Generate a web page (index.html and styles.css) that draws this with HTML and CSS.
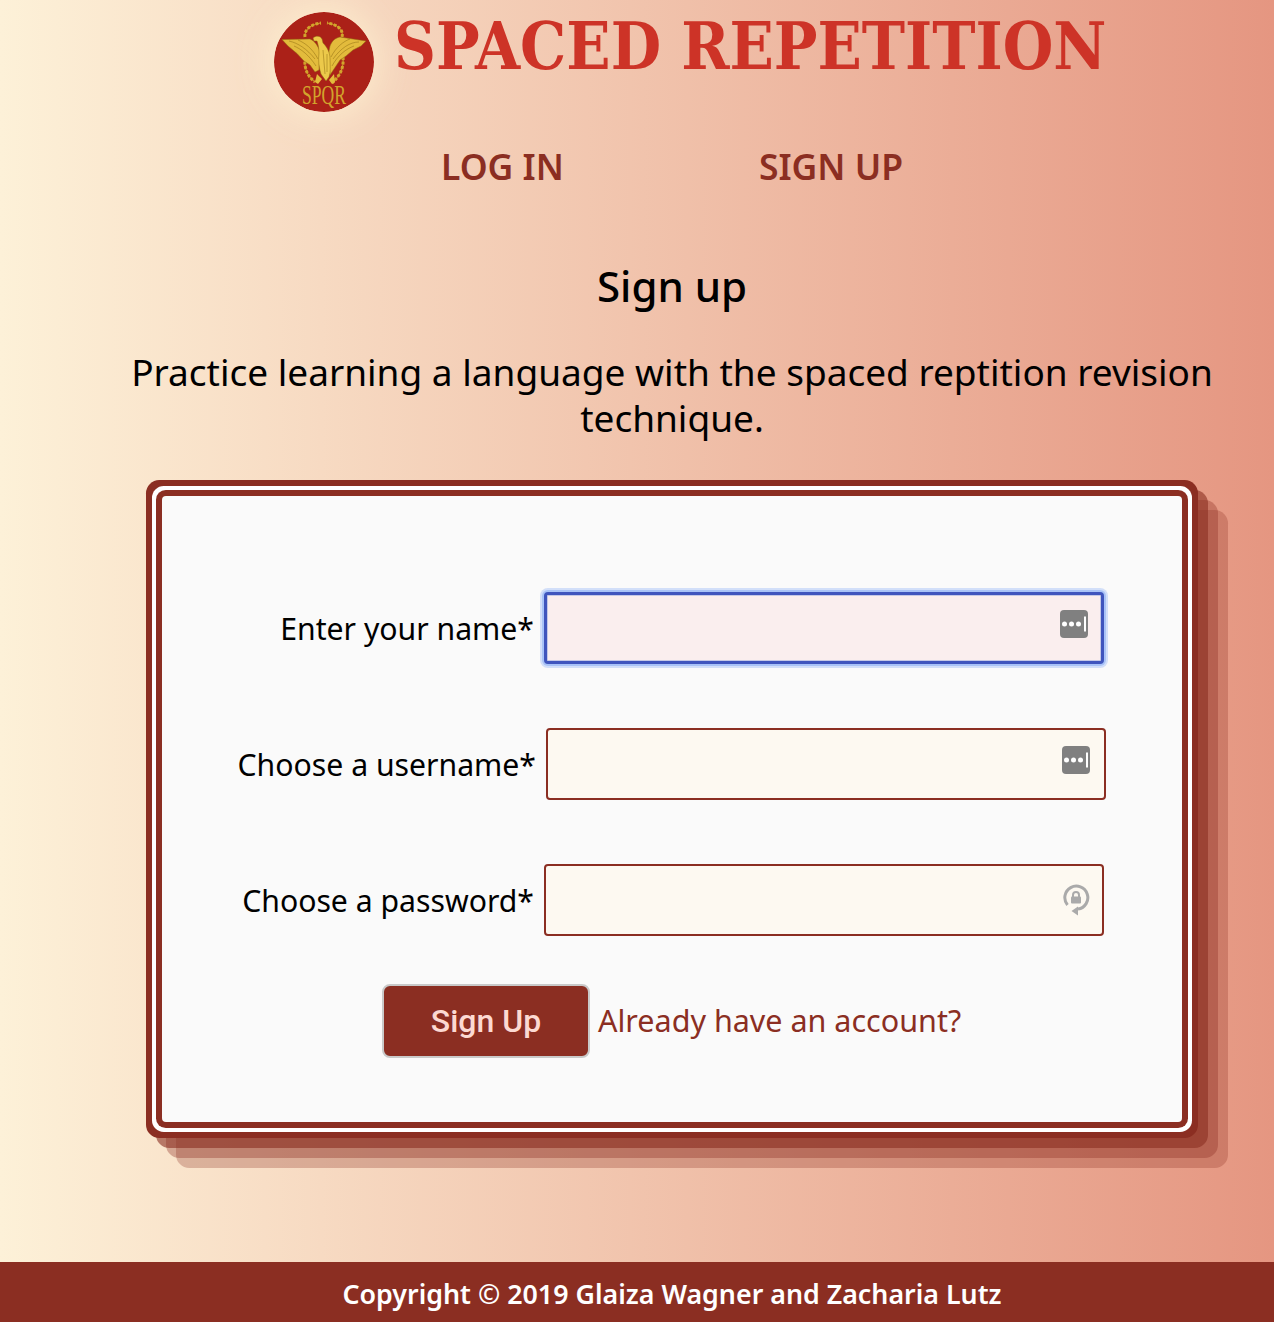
FILE: index.html
```html
<!DOCTYPE html>
<html lang="en">
<head>
<meta charset="utf-8">
<title>Spaced Repetition</title>
<link rel="stylesheet" href="styles.css">
</head>
<body>
<header class="site-header">
  <div class="brand">
    <svg class="logo" viewBox="0 0 100 100" aria-hidden="true">
      <circle cx="50" cy="50" r="50" fill="#ab2118"/>
      <g fill="none" stroke="#d2a42c" stroke-linecap="butt">
        <g stroke-width="1">
          <path d="M31 25C30 17 38 12 47 11"/>
          <path d="M68 25C70 17 62 12 53 11"/>
          <path d="M31 45C30 56 33 64 41 70"/>
          <path d="M69 45C70 56 66 64 58 71"/>
        </g>
        <g stroke-width="3" stroke-dasharray="3 1.500">
          <path d="M31 25C30 17 38 12 47 11"/>
          <path d="M68 25C70 17 62 12 53 11"/>
          <path d="M31 45C30 56 33 64 41 70"/>
          <path d="M69 45C70 56 66 64 58 71"/>
        </g>
      </g>
      <path fill="#e3bb3c" stroke="#8f6c12" stroke-width=".5" d="M8 27.500L36 27C41 29 44 34 46 40L45 58L41 60L36 53L30 49L23 41.500L14 34Z"/>
      <path fill="#e3bb3c" stroke="#8f6c12" stroke-width=".5" d="M92 29L66 25C61 26 58 29 56 34L54 44L56 63L60 57L66 48L72 44L79 38L87 34Z"/>
      <path fill="#ecc94a" stroke="#8f6c12" stroke-width=".5" d="M39 26C42 23 47 24 48 27L49 31C53 35 56 40 56 47C56 54 57 60 55 65L52 69L47 62C45 56 44 48 45 41C45 36 44 32 43 29L40 29Z"/>
      <g fill="none" stroke="#8f6c12" stroke-width=".5">
        <path d="M15 29C24 31 33 37 41 47"/>
        <path d="M24 28C31 31 38 36 44 47"/>
        <path d="M20 34C27 37 35 43 42 54"/>
        <path d="M85 30C76 30 67 36 59 47"/>
        <path d="M76 27C70 29 62 35 57 45"/>
        <path d="M80 34C72 37 64 43 58 54"/>
        <path d="M49 38L51 62"/>
        <path d="M53 42L53 60"/>
      </g>
      <path fill="#e3bb3c" d="M43 62l5 5-4 5-3-2zM60 62l-5 6 3 4 3-2z"/>
      <text class="logo-text" x="50" y="91.500" text-anchor="middle" textLength="44" lengthAdjust="spacingAndGlyphs">SPQR</text>
    </svg>
    <h1 class="site-title">SPACED REPETITION</h1>
  </div>
  <nav class="site-nav">
    <a class="nav-link" href="#">LOG IN</a>
    <a class="nav-link" href="#">SIGN UP</a>
  </nav>
</header>
<main class="content">
  <h2 class="page-title">Sign up</h2>
  <p class="intro">Practice learning a language with the spaced reptition revision technique.</p>
  <form class="card">
    <div class="field">
      <label class="field-label" for="name">Enter your name*</label>
      <div class="input-box input-box--focus">
        <input class="text-input" id="name" type="text">
        <svg class="key-icon" viewBox="0 0 28 28" aria-hidden="true">
          <rect width="28" height="28" rx="4" fill="#808080"/>
          <circle cx="4.500" cy="14" r="2.500" fill="#fff"/><circle cx="11.500" cy="14" r="2.500" fill="#fff"/><circle cx="18.500" cy="14" r="2.500" fill="#fff"/>
          <rect x="24" y="6.500" width="2" height="15" fill="#fff"/>
        </svg>
      </div>
    </div>
    <div class="field field--shifted">
      <label class="field-label" for="username">Choose a username*</label>
      <div class="input-box">
        <input class="text-input" id="username" type="text">
        <svg class="key-icon" viewBox="0 0 28 28" aria-hidden="true">
          <rect width="28" height="28" rx="4" fill="#808080"/>
          <circle cx="4.500" cy="14" r="2.500" fill="#fff"/><circle cx="11.500" cy="14" r="2.500" fill="#fff"/><circle cx="18.500" cy="14" r="2.500" fill="#fff"/>
          <rect x="24" y="6.500" width="2" height="15" fill="#fff"/>
        </svg>
      </div>
    </div>
    <div class="field">
      <label class="field-label" for="password">Choose a password*</label>
      <div class="input-box">
        <input class="text-input" id="password" type="password">
        <svg class="lock-icon" viewBox="0 0 28 34" aria-hidden="true">
          <path d="M16 27A11.500 11.500 0 1 0 5.500 23" fill="none" stroke="#aaa" stroke-width="3"/>
          <path d="M16 24.500v9l-6.500-4.500z" fill="#aaa"/>
          <path d="M11 15v-2a3 3 0 0 1 6 0v2" fill="none" stroke="#aaa" stroke-width="2"/>
          <rect x="9" y="14.500" width="10" height="7" rx="1" fill="#aaa"/>
        </svg>
      </div>
    </div>
    <div class="actions">
      <button class="submit" type="button">Sign Up</button>
      <a class="account-link" href="#">Already have an account?</a>
    </div>
  </form>
</main>
<footer class="site-footer">Copyright © 2019 Glaiza Wagner and Zacharia Lutz</footer>
</body>
</html>
```
FILE: styles.css
```css
* { box-sizing: border-box; }
html, body { height: 100%; }
body {
  margin: 0;
  min-height: 1322px;
  display: flex;
  flex-direction: column;
  font-family: "Noto Sans", sans-serif;
  color: #000;
  background: linear-gradient(to right, #fdf1d8 0%, #e59681 100%);
  overflow: hidden;
}
.site-header { display: flex; flex-direction: column; }
.brand {
  display: flex;
  align-items: flex-start;
  padding: 12px 0 0 274px;
  gap: 20px;
}
.logo {
  width: 100px;
  height: 100px;
  flex: none;
  border-radius: 50%;
  box-shadow: 0 0 40px rgba(255, 244, 210, .9);
}
.logo-text { font-family: "Liberation Serif", serif; font-size: 27px; fill: #d2a42c; }
.site-title {
  margin: -12px 0 0;
  font-family: "DejaVu Serif", serif;
  font-stretch: condensed;
  font-size: 64.600px;
  line-height: 92px;
  font-weight: 700;
  color: #cd3327;
  white-space: nowrap;
}
.site-nav {
  display: flex;
  gap: 195px;
  padding: 31px 0 0 441px;
}
.nav-link {
  font-size: 35.500px;
  line-height: 46px;
  font-weight: 600;
  color: #8b2e22;
  text-decoration: none;
}
.content {
  flex: 1;
  display: flex;
  flex-direction: column;
  align-items: center;
  padding-left: 70px;
}
.page-title {
  margin: 72px 0 0;
  font-size: 42px;
  line-height: 50px;
  font-weight: 500;
}
.intro {
  margin: 38px 0 0;
  width: 1100px;
  font-size: 37px;
  line-height: 46px;
  text-align: center;
}
.card {
  width: 1020px;
  height: 626px;
  margin-top: 55px;
  padding-top: 96px;
  background: #fafafa;
  border-radius: 4px;
  box-shadow:
    0 0 0 6px #8b2e22,
    0 0 0 10px #fff,
    0 0 0 16px #8b2e22,
    10px 10px 0 16px rgba(139, 46, 34, .6),
    20px 20px 0 16px rgba(139, 46, 34, .35),
    30px 30px 0 16px rgba(139, 46, 34, .28);
}
.field {
  display: flex;
  align-items: center;
  height: 72px;
  margin-bottom: 64px;
}
.field--shifted { padding-left: 2px; }
.field-label {
  width: 382px;
  padding-right: 10px;
  text-align: right;
  font-size: 30.200px;
  white-space: nowrap;
}
.input-box { position: relative; width: 560px; height: 72px; flex: none; }
.text-input {
  display: block;
  width: 100%;
  height: 100%;
  border: 2px solid #8b2e22;
  border-radius: 4px;
  background: #fdf9f1;
  outline: none;
}
.input-box--focus .text-input {
  border: 3px solid #3f55bd;
  background: #faeeee;
  box-shadow: inset 0 0 0 1px #c5c8e6, 0 0 0 2px #a9c3f7, 0 0 0 4px rgba(169, 195, 247, .5);
}
.key-icon {
  position: absolute;
  right: 16px;
  top: 18px;
  width: 28px;
  height: 28px;
}
.lock-icon {
  position: absolute;
  right: 14px;
  top: 18px;
  width: 28px;
  height: 34px;
}
.actions {
  display: flex;
  align-items: center;
  gap: 8px;
  margin-top: -16px;
  padding-left: 220px;
}
.submit {
  width: 208px;
  height: 74px;
  border: 2px solid #c9c9c9;
  border-radius: 8px;
  background: #8b2e22;
  color: #fcd9d2;
  font-family: Roboto, sans-serif;
  font-size: 32px;
  font-weight: 500;
}
.account-link {
  margin-bottom: 2px;
  font-size: 30.500px;
  color: #8b2e22;
  text-decoration: none;
}
.site-footer {
  height: 60px;
  background: #8b2e22;
  color: #fff;
  font-size: 26.800px;
  font-weight: 600;
  line-height: 64px;
  padding-left: 70px;
  text-align: center;
}
```
